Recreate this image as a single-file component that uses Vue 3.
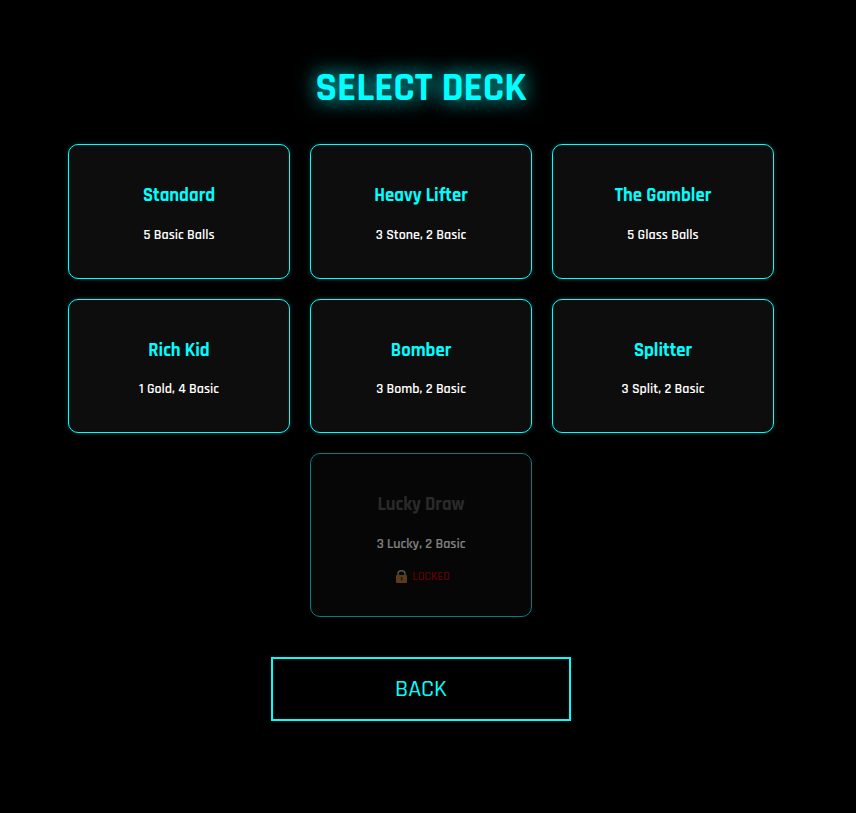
<script setup>
const decks = [
  { name: 'Standard', desc: '5 Basic Balls' },
  { name: 'Heavy Lifter', desc: '3 Stone, 2 Basic' },
  { name: 'The Gambler', desc: '5 Glass Balls' },
  { name: 'Rich Kid', desc: '1 Gold, 4 Basic' },
  { name: 'Bomber', desc: '3 Bomb, 2 Basic' },
  { name: 'Splitter', desc: '3 Split, 2 Basic' },
  { name: 'Lucky Draw', desc: '3 Lucky, 2 Basic', locked: true },
]
</script>

<template>
  <main class="screen">
    <h1 class="title">SELECT DECK</h1>
    <section class="grid">
      <article v-for="d in decks" :key="d.name" class="card" :class="{ locked: d.locked }">
        <h3 class="name">{{ d.name }}</h3>
        <p class="desc">{{ d.desc }}</p>
        <div v-if="d.locked" class="lock">
          <svg class="lock-icon" viewBox="0 0 15 13" width="15" height="13" aria-hidden="true">
            <path d="M6 6V3.6a3.5 2.8 0 0 1 7 0V6" fill="none" stroke="#aaa" stroke-width="1.4" />
            <rect x="4" y="5" width="11" height="8" rx="1" fill="#b8763a" />
            <rect x="8.9" y="7" width="1.4" height="3.4" fill="#402810" />
          </svg>
          <span>LOCKED</span>
        </div>
      </article>
    </section>
    <button class="back">BACK</button>
  </main>
</template>

<style>
html, body { margin: 0; background: #000; }
</style>

<style scoped>
.screen {
  box-sizing: border-box;
  width: 856px;
  height: 813px;
  padding: 63px 14px 0 0;
  display: flex;
  flex-direction: column;
  align-items: center;
  background: #000;
  color: #fff;
  font-family: "Rajdhani", "Roboto", "Liberation Sans", sans-serif;
  font-weight: 500;
}
.title {
  margin: 0 0 30.4px;
  font-size: 40px;
  font-weight: 700;
  color: #0ff;
  text-shadow: 0 0 20px #0ff;
}
.grid {
  display: flex;
  flex-wrap: wrap;
  justify-content: center;
  gap: 20px;
  width: 706px;
}
.card {
  box-sizing: border-box;
  width: 222px;
  padding: 20px;
  text-align: center;
  background: #0d0d0d;
  border: 1px solid #0ff;
  border-radius: 10px;
  box-shadow: 0 0 5px rgba(0, 255, 255, 0.2);
}
.name {
  margin: 18.72px 0;
  font-size: 18.72px;
  font-weight: 700;
  color: #0ff;
}
.desc {
  margin: 14px 0;
  font-size: 14px;
  font-weight: 600;
}
.locked { opacity: 0.5; box-shadow: none; }
.locked .name { color: #555; }
.lock {
  display: flex;
  justify-content: center;
  align-items: center;
  gap: 5px;
  margin: 16px 0 12.7px;
  font-size: 12px;
  color: #d00;
}
.back {
  box-sizing: border-box;
  width: 300px;
  height: 64px;
  margin-top: 40px;
  background: #000;
  border: 2px solid #0ff;
  color: #0ff;
  font-family: inherit;
  font-weight: 500;
  font-size: 24px;
}
</style>
